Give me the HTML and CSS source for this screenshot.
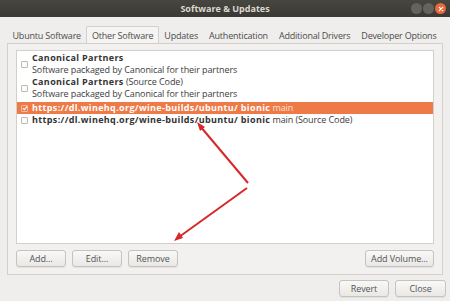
FILE: index.html
```html
<!DOCTYPE html>
<html>
<head>
<meta charset="utf-8">
<link rel="stylesheet" href="styles.css">
</head>
<body>
<div class="window">
  <header class="titlebar">
    <span class="title">Software &amp; Updates</span>
    <div class="wm">
      <span class="wm-btn"></span>
      <span class="wm-btn"></span>
      <span class="wm-btn wm-close"><svg viewBox="0 0 10 10" width="10" height="10"><path d="M3.3 3.3 L6.7 6.7 M6.7 3.3 L3.3 6.7" stroke="#fff" stroke-width="1.2" stroke-linecap="round"/></svg></span>
    </div>
  </header>
  <div class="content">
    <nav class="tabs">
      <span class="tab">Ubuntu Software</span>
      <span class="tab tab-active">Other Software</span>
      <span class="tab">Updates</span>
      <span class="tab">Authentication</span>
      <span class="tab">Additional Drivers</span>
      <span class="tab">Developer Options</span>
    </nav>
    <section class="notebook">
      <ul class="sources">
        <li class="row row-two">
          <span class="check"></span>
          <div class="lines">
            <div class="l1"><b>Canonical Partners</b></div>
            <div class="l2">Software packaged by Canonical for their partners</div>
          </div>
        </li>
        <li class="row row-two">
          <span class="check"></span>
          <div class="lines">
            <div class="l1"><b>Canonical Partners</b> (Source Code)</div>
            <div class="l2">Software packaged by Canonical for their partners</div>
          </div>
        </li>
        <li class="row row-one row-selected">
          <span class="check check-on"><svg viewBox="0 0 8 8" width="8" height="8"><path d="M1.8 4.2 L3.3 5.6 L6.2 2.4" fill="none" stroke="#fff" stroke-width="1.1"/></svg></span>
          <div class="lines"><div class="l1"><b>https://dl.winehq.org/wine-builds/ubuntu/ bionic</b> main</div></div>
        </li>
        <li class="row row-one">
          <span class="check"></span>
          <div class="lines"><div class="l1"><b>https://dl.winehq.org/wine-builds/ubuntu/ bionic</b> main (Source Code)</div></div>
        </li>
      </ul>
      <div class="actions">
        <button class="btn btn-w50">Add...</button>
        <button class="btn btn-w50">Edit...</button>
        <button class="btn btn-w50">Remove</button>
        <span class="spacer"></span>
        <button class="btn btn-vol">Add Volume...</button>
      </div>
    </section>
    <div class="footer">
      <button class="btn btn-w50">Revert</button>
      <button class="btn btn-close">Close</button>
    </div>
  </div>
  <svg class="annot" width="450" height="301" viewBox="0 0 450 301">
    <line x1="248" y1="183" x2="200" y2="126" stroke="#d8262a" stroke-width="2"/>
    <polygon points="197,122 205,127 200,131" fill="#d8262a"/>
    <line x1="247" y1="188" x2="179" y2="237" stroke="#d8262a" stroke-width="2"/>
    <polygon points="174,241 179,232 183,238" fill="#d8262a"/>
  </svg>
</div>
</body>
</html>
```
FILE: styles.css
```css
* { box-sizing: border-box; }
html, body { margin: 0; padding: 0; }
body {
  width: 450px;
  height: 301px;
  overflow: hidden;
  font-family: "Open Sans", "Noto Sans", sans-serif;
  font-size: 9px;
  letter-spacing: -0.1px;
  color: #3c3c3c;
  background: #efeeec;
}
.window {
  position: relative;
  width: 450px;
  height: 301px;
  display: flex;
  flex-direction: column;
  background: #efeeec;
}
.titlebar {
  height: 17px;
  flex: none;
  background: linear-gradient(#47463f, #3a3935);
  display: flex;
  align-items: center;
  justify-content: center;
  position: relative;
}
.title {
  color: #dcd8cf;
  font-weight: bold;
  font-size: 9px;
  letter-spacing: 0;
}
.wm {
  position: absolute;
  right: 4px;
  top: 3px;
  display: flex;
  gap: 1px;
}
.wm-btn {
  width: 11px;
  height: 11px;
  border-radius: 50%;
  background: #64635e;
  display: flex;
  align-items: center;
  justify-content: center;
}
.wm-close { background: #e8693a; }
.content {
  flex: 1;
  display: flex;
  flex-direction: column;
}
.tabs {
  height: 26px;
  display: flex;
  align-items: flex-end;
  margin: 0 7px;
}
.tab {
  height: 17px;
  padding: 0 4.5px;
  display: flex;
  align-items: center;
  color: #4c4c4c;
  letter-spacing: -0.2px;
  white-space: nowrap;
  border: 1px solid transparent;
  border-bottom: none;
}
.tab-active {
  border-color: #d3d0cb;
  border-radius: 2px 2px 0 0;
  background: #f5f4f3;
  margin-bottom: -1px;
  height: 18px;
}
.notebook {
  margin: 0 7px;
  height: 232px;
  border: 1px solid #d3d0cb;
  background: #f2f1f0;
  padding: 6px 8px 7px 8px;
  display: flex;
  flex-direction: column;
  gap: 6px;
}
.sources {
  list-style: none;
  margin: 0;
  padding: 1px 0 0 0;
  flex: 1;
  background: #fff;
  border: 1px solid #d3d0cb;
}
.row {
  display: flex;
  align-items: center;
  padding-left: 4px;
  white-space: nowrap;
}
.row-two { height: 24px; }
.row-one { height: 12px; }
.row-selected { background: #ee7a48; color: #fde3d6; margin-top: 2px; }
.check {
  width: 7px;
  height: 7px;
  flex: none;
  border: 1px solid #bdbab5;
  border-radius: 1px;
  background: #fbfbfa;
  margin-right: 4px;
  display: flex;
  align-items: center;
  justify-content: center;
}
.check-on {
  background: #ee7a48;
  border-color: #f6b89c;
}
.check-on svg { flex: none; }
.lines { line-height: 12px; }
.l1 b { font-weight: bold; color: #333; letter-spacing: 0.35px; }
.row-selected .l1 b { color: #fff; }
.actions {
  display: flex;
  gap: 6px;
  height: 17px;
}
.spacer { flex: 1; }
.btn {
  height: 17px;
  font-family: inherit;
  font-size: 9px;
  letter-spacing: -0.1px;
  color: #555;
  border: 1px solid #c6c3be;
  border-radius: 3px;
  background: linear-gradient(#f8f8f7, #e9e8e6);
  padding: 0;
  box-shadow: 0 1px 0 rgba(0,0,0,0.06);
}
.btn-w50 { width: 50px; }
.btn-vol { width: 69px; }
.btn-close { width: 51px; }
.footer {
  display: flex;
  justify-content: flex-end;
  gap: 6px;
  padding: 5px 4px 0 0;
}
.annot {
  position: absolute;
  left: 0;
  top: 0;
  pointer-events: none;
}
```
